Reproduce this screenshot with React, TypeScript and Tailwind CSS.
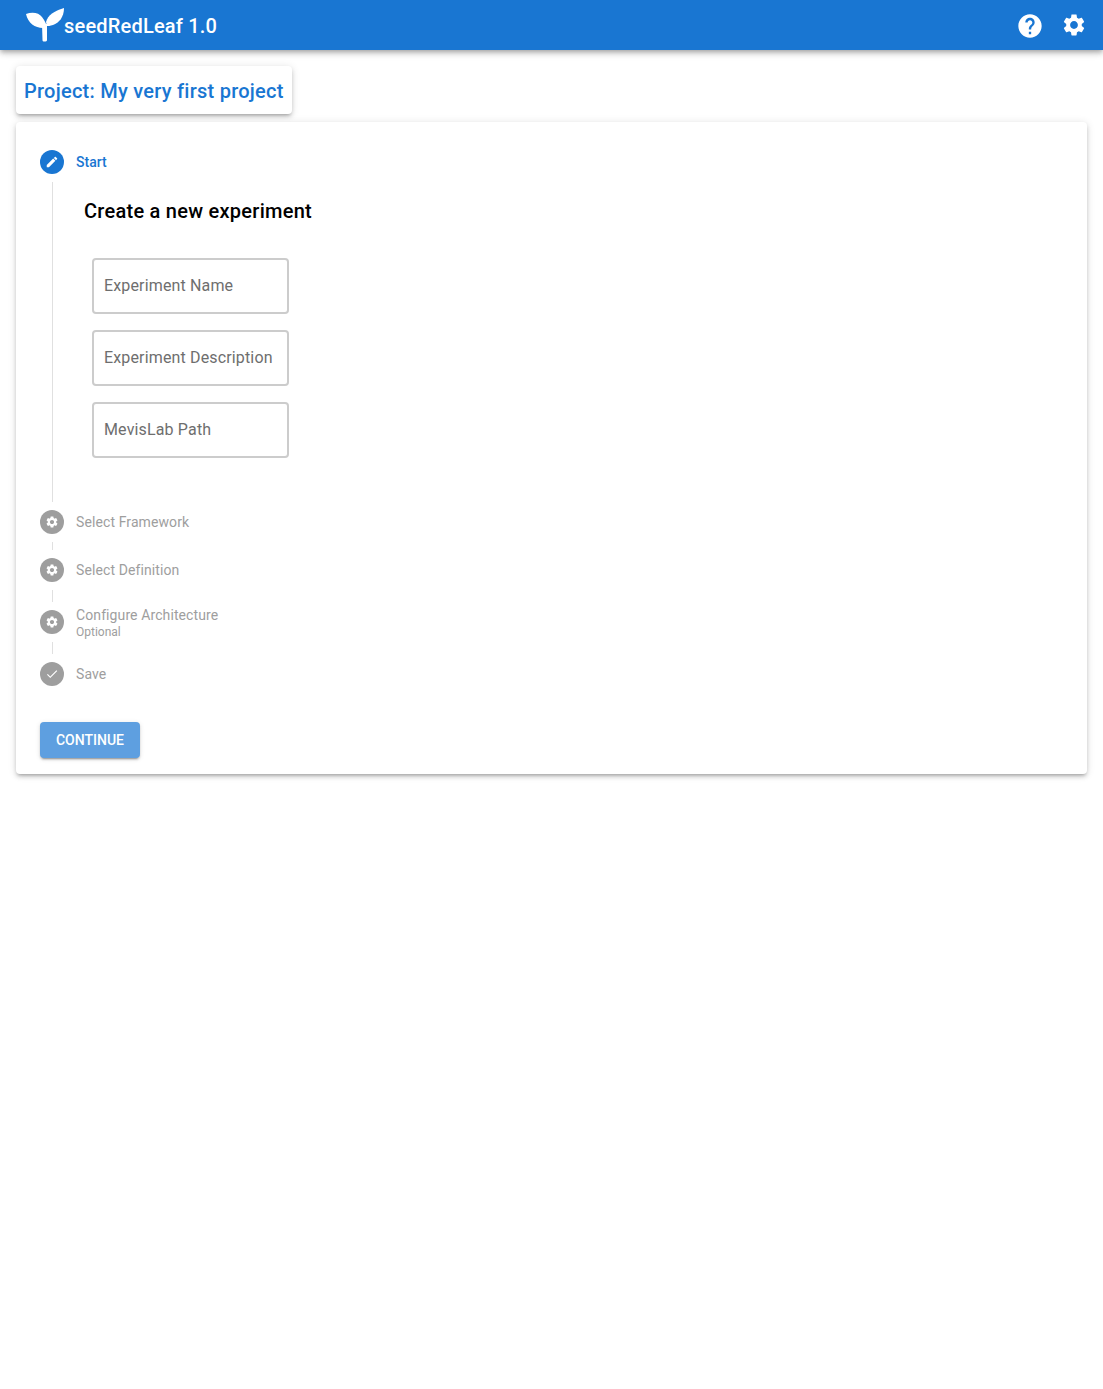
import React from 'react';

const GEAR = "M19.14 12.94c.04-.3.06-.61.06-.94 0-.32-.02-.64-.07-.94l2.03-1.58c.18-.14.23-.41.12-.61l-1.92-3.32c-.12-.22-.37-.29-.59-.22l-2.39.96c-.5-.38-1.03-.7-1.62-.94l-.36-2.54c-.04-.24-.24-.41-.48-.41h-3.84c-.24 0-.43.17-.47.41l-.36 2.54c-.59.24-1.13.57-1.62.94l-2.39-.96c-.22-.08-.47 0-.59.22L2.74 8.87c-.12.21-.08.47.12.61l2.03 1.58c-.05.3-.09.63-.09.94s.02.64.07.94l-2.03 1.58c-.18.14-.23.41-.12.61l1.92 3.32c.12.22.37.29.59.22l2.39-.96c.5.38 1.03.7 1.62.94l.36 2.54c.05.24.24.41.48.41h3.84c.24 0 .44-.17.47-.41l.36-2.54c.59-.24 1.13-.56 1.62-.94l2.39.96c.22.08.47 0 .59-.22l1.92-3.32c.12-.22.07-.47-.12-.61l-2.01-1.58zM12 15.6c-1.98 0-3.6-1.62-3.6-3.6s1.62-3.6 3.6-3.6 3.6 1.62 3.6 3.6-1.62 3.6-3.6 3.6z";
const HELP = "M12 2C6.48 2 2 6.48 2 12s4.48 10 10 10 10-4.48 10-10S17.52 2 12 2zm1 17h-2v-2h2v2zm2.07-7.75l-.9.92C13.45 12.9 13 13.5 13 15h-2v-.5c0-1.1.45-2.1 1.17-2.83l1.24-1.26c.37-.36.59-.86.59-1.41 0-1.1-.9-2-2-2s-2 .9-2 2H8c0-2.21 1.79-4 4-4s4 1.79 4 4c0 .88-.36 1.68-.93 2.25z";
const EDIT = "M3 17.25V21h3.75L17.81 9.94l-3.75-3.75L3 17.25zM20.71 7.04c.39-.39.39-1.02 0-1.41l-2.34-2.34c-.39-.39-1.02-.39-1.41 0l-1.83 1.83 3.75 3.75 1.83-1.83z";
const CHECK = "M9 16.17L4.83 12l-1.42 1.41L9 19 21 7l-1.41-1.41z";

const Logo = () => (
  <svg width="40" height="36" viewBox="0 0 40 36" fill="white" className="block">
    <path d="M0 6 C6 3.5 13 4.5 16 9 C19 13 21 17 21 20 L17 20 C9 20 2 15 0 6 Z" />
    <path d="M20 14 C22 7 28 3 38 0 C38 9 33 15 27 17 C24 18 22 18 21 18 Z" />
    <path d="M16 16 L21 16 L21 32 C21 33 20 33.5 18.5 33.5 C17 33.5 16.5 33 16.5 32 Z" />
  </svg>
);

const StepIcon = ({ d, active, size = 14 }: { d: string; active?: boolean; size?: number }) => (
  <div className={`w-6 h-6 shrink-0 rounded-full flex items-center justify-center ${active ? 'bg-[#1976d2]' : 'bg-[#9e9e9e]'}`}>
    <svg width={size} height={size} viewBox="0 0 24 24" fill="white"><path d={d} /></svg>
  </div>
);

const Connector = ({ h }: { h: string }) => <div className={`ml-3 my-2 w-px bg-[#e0e0e0] ${h}`}></div>;

const fields = ['Experiment Name', 'Experiment Description', 'MevisLab Path'];

export default function App() {
  return (
    <div className="min-h-[1389px] bg-white font-['Roboto',sans-serif]">
      <header className="h-[50px] bg-[#1976d2] flex items-center justify-between pl-[26px] pr-4 shadow-[0_2px_4px_-1px_rgba(0,0,0,0.2),0_4px_5px_0_rgba(0,0,0,0.14),0_1px_10px_0_rgba(0,0,0,0.12)]">
        <div className="flex items-start h-full pt-[8px]">
          <Logo />
          <span className="-ml-[2px] mt-[6px] text-[20px] leading-[24px] font-medium tracking-[0.2px] text-white">seedRedLeaf 1.0</span>
        </div>
        <div className="flex items-center gap-[17px]">
          <svg width="28" height="28" viewBox="0 0 24 24" fill="white" className="mt-[2px]"><path d={HELP} /></svg>
          <svg width="26" height="26" viewBox="0 0 24 24" fill="white" className="-mt-[1px]"><path d={GEAR} /></svg>
        </div>
      </header>

      <main className="px-4 pt-4">
        <div className="w-[276px] h-12 px-2 pt-[2px] flex items-center rounded bg-white shadow-[0_3px_3px_-2px_rgba(0,0,0,0.2),0_3px_4px_0_rgba(0,0,0,0.14),0_1px_8px_0_rgba(0,0,0,0.12)]">
          <h2 className="text-[20px] leading-8 font-medium tracking-[0.25px] whitespace-nowrap text-[#1976d2]">Project: My very first project</h2>
        </div>

        <div className="mt-2 h-[652px] rounded bg-white px-6 pt-7 shadow-[0_3px_3px_-2px_rgba(0,0,0,0.2),0_3px_4px_0_rgba(0,0,0,0.14),0_1px_8px_0_rgba(0,0,0,0.12)]">
          <div className="flex items-center gap-3 h-6">
            <StepIcon d={EDIT} active />
            <span className="text-sm font-medium text-[#1976d2]">Start</span>
          </div>
          <div className="ml-3 my-2 h-[320px] border-l border-[#e0e0e0] pl-[31px] pt-[13px]">
            <h3 className="text-[20px] leading-8 font-medium tracking-[0.26px] text-black">Create a new experiment</h3>
            <div className="mt-[31px] ml-2 flex flex-col gap-4">
              {fields.map(f => (
                <input key={f} placeholder={f} className="w-[197px] h-14 px-[10px] pb-[2px] rounded border-2 border-[#cccccc] text-base tracking-[0.15px] text-[#212121] placeholder:text-[#6e6e6e] focus:outline-none" />
              ))}
            </div>
          </div>

          <div className="flex items-center gap-3 h-6">
            <StepIcon d={GEAR} />
            <span className="text-sm tracking-[0.1px] text-[#9e9e9e]">Select Framework</span>
          </div>
          <Connector h="h-2" />
          <div className="flex items-center gap-3 h-6">
            <StepIcon d={GEAR} />
            <span className="text-sm tracking-[0.1px] text-[#9e9e9e]">Select Definition</span>
          </div>
          <Connector h="h-3" />
          <div className="flex items-center gap-3 h-6">
            <StepIcon d={GEAR} />
            <div className="flex flex-col mt-[2px]">
              <span className="text-sm leading-[18px] tracking-[0.1px] text-[#9e9e9e]">Configure Architecture</span>
              <span className="text-xs leading-4 text-[#9e9e9e]">Optional</span>
            </div>
          </div>
          <Connector h="h-3" />
          <div className="flex items-center gap-3 h-6">
            <StepIcon d={CHECK} />
            <span className="text-sm tracking-[0.1px] text-[#9e9e9e]">Save</span>
          </div>

          <button className="mt-9 w-[100px] h-9 rounded bg-[#5e9fe0] text-sm font-medium text-white shadow-[0_3px_1px_-2px_rgba(0,0,0,0.2),0_2px_2px_0_rgba(0,0,0,0.14),0_1px_5px_0_rgba(0,0,0,0.12)]">CONTINUE</button>
        </div>
      </main>
    </div>
  );
}
